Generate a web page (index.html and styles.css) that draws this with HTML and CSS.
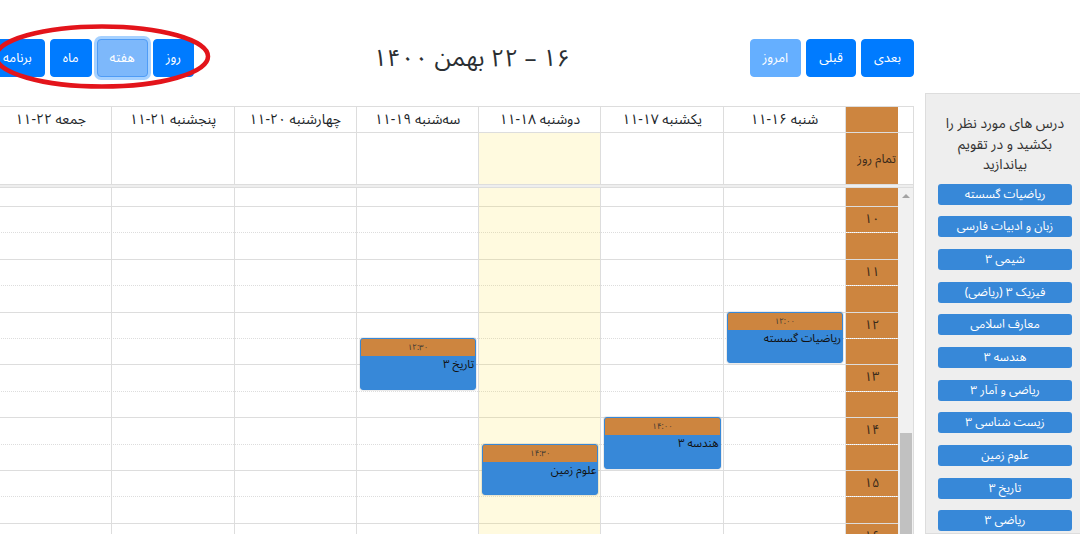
FILE: index.html
```html
<!DOCTYPE html>
<html lang="fa" dir="rtl">
<head>
<meta charset="utf-8">
<title>تقویم</title>
<link rel="stylesheet" href="styles.css">
</head>
<body>
<div class="page">
  <aside class="sidebar">
    <p class="hint">درس های مورد نظر را<br>بکشید و در تقویم<br>بیاندازید</p>
    <div class="course">ریاضیات گسسته</div>
    <div class="course">زبان و ادبیات فارسی</div>
    <div class="course">شیمی ۳</div>
    <div class="course">فیزیک ۳ (ریاضی)</div>
    <div class="course">معارف اسلامی</div>
    <div class="course">هندسه ۳</div>
    <div class="course">ریاضی و آمار ۳</div>
    <div class="course">زیست شناسی ۳</div>
    <div class="course">علوم زمین</div>
    <div class="course">تاریخ ۳</div>
    <div class="course">ریاضی ۳</div>
  </aside>

  <main class="cal">
    <div class="toolbar">
      <div class="btn-group">
        <button class="btn">بعدی</button>
        <button class="btn">قبلی</button>
        <button class="btn is-off">امروز</button>
      </div>
      <h2 class="title">۱۶ – ۲۲ بهمن ۱۴۰۰</h2>
      <div class="btn-group">
        <button class="btn">روز</button>
        <button class="btn is-active">هفته</button>
        <button class="btn">ماه</button>
        <button class="btn">برنامه</button>
      </div>
    </div>

    <div class="grid">
      <div class="row head">
        <div class="sb-space"></div>
        <div class="axis"></div>
        <div class="day">شنبه ۱۶-۱۱</div>
        <div class="day">یکشنبه ۱۷-۱۱</div>
        <div class="day">دوشنبه ۱۸-۱۱</div>
        <div class="day">سه‌شنبه ۱۹-۱۱</div>
        <div class="day">چهارشنبه ۲۰-۱۱</div>
        <div class="day">پنجشنبه ۲۱-۱۱</div>
        <div class="day">جمعه ۲۲-۱۱</div>
      </div>
      <div class="row allday">
        <div class="sb-space"></div>
        <div class="axis">تمام روز</div>
        <div class="day"></div>
        <div class="day"></div>
        <div class="day today"></div>
        <div class="day"></div>
        <div class="day"></div>
        <div class="day"></div>
        <div class="day"></div>
      </div>
      <div class="divider"></div>

      <div class="tbody">
        <div class="sbar">
          <span class="sbar-arrow"></span>
          <span class="sbar-thumb"></span>
        </div>
        <div class="scroller">
          <div class="slot first"><div class="axis"></div><div class="lane"></div></div>
          <div class="slot"><div class="axis">۱۰</div><div class="lane"></div></div>
          <div class="slot minor"><div class="axis"></div><div class="lane"></div></div>
          <div class="slot"><div class="axis">۱۱</div><div class="lane"></div></div>
          <div class="slot minor"><div class="axis"></div><div class="lane"></div></div>
          <div class="slot"><div class="axis">۱۲</div><div class="lane"></div></div>
          <div class="slot minor"><div class="axis"></div><div class="lane"></div></div>
          <div class="slot"><div class="axis">۱۳</div><div class="lane"></div></div>
          <div class="slot minor"><div class="axis"></div><div class="lane"></div></div>
          <div class="slot"><div class="axis">۱۴</div><div class="lane"></div></div>
          <div class="slot minor"><div class="axis"></div><div class="lane"></div></div>
          <div class="slot"><div class="axis">۱۵</div><div class="lane"></div></div>
          <div class="slot minor"><div class="axis"></div><div class="lane"></div></div>
          <div class="slot"><div class="axis">۱۶</div><div class="lane"></div></div>
          <div class="slot minor"><div class="axis"></div><div class="lane"></div></div>

          <div class="cols">
            <div class="col">
              <div class="ev" style="top:123.6px;height:51.8px">
                <div class="ev-time">۱۲:۰۰</div>
                <div class="ev-title">ریاضیات گسسته</div>
              </div>
            </div>
            <div class="col">
              <div class="ev" style="top:229.2px;height:51.8px">
                <div class="ev-time">۱۴:۰۰</div>
                <div class="ev-title">هندسه ۳</div>
              </div>
            </div>
            <div class="col today">
              <div class="ev" style="top:255.6px;height:51.8px">
                <div class="ev-time">۱۴:۳۰</div>
                <div class="ev-title">علوم زمین</div>
              </div>
            </div>
            <div class="col">
              <div class="ev" style="top:150px;height:51.8px">
                <div class="ev-time">۱۲:۳۰</div>
                <div class="ev-title">تاریخ ۳</div>
              </div>
            </div>
            <div class="col"></div>
            <div class="col"></div>
            <div class="col"></div>
          </div>
        </div>
      </div>
    </div>
  </main>
</div>

<svg class="mark" width="230" height="75" viewBox="0 0 230 75" aria-hidden="true">
  <ellipse cx="112" cy="36.5" rx="106" ry="30" fill="none" stroke="#e3141b" stroke-width="4.5"/>
</svg>
</body>
</html>
```
FILE: styles.css
```css
* {
  box-sizing: border-box;
}

html,
body {
  margin: 0;
  overflow: hidden;
}

body {
  position: relative;
  width: 1080px;
  height: 534px;
  background: #fff;
  color: #212529;
  font-family: "Noto Sans Arabic", "Noto Naskh Arabic", "DejaVu Sans", sans-serif;
}

.page {
  display: flex;
  align-items: flex-start;
  gap: 11px;
  height: 534px;
}

/* ---------- sidebar ---------- */
.sidebar {
  flex: none;
  width: 155px;
  height: 441px;
  margin-top: 93px;
  padding: 20px 8px 0 12px;
  background: #eee;
  border: 1px solid #ddd;
  border-right: none;
}

.hint {
  margin: 0 0 8px;
  font-size: 14px;
  line-height: 20.5px;
  text-align: center;
  color: #333;
}

.course {
  height: 21px;
  margin-bottom: 11.7px;
  line-height: 21px;
  font-size: 12px;
  text-align: center;
  color: #fff;
  background: #3788d8;
  border-radius: 3px;
}

/* ---------- calendar ---------- */
.cal {
  flex: none;
  width: 924px;
  margin-left: -10px;
  padding-top: 39px;
}

.toolbar {
  display: flex;
  align-items: center;
  justify-content: space-between;
  height: 38px;
  margin-bottom: 29px;
}

.btn-group {
  display: flex;
  gap: 5px;
}

.btn {
  padding: 6px 12px;
  font-family: inherit;
  font-size: 13px;
  line-height: 24px;
  color: #fff;
  background: #007bff;
  border: 1px solid #007bff;
  border-radius: 4px;
}

.btn.is-off {
  opacity: 0.6;
}

.btn.is-active {
  background: #7db8fb;
  border-color: #4f9cf6;
  box-shadow: 0 0 0 3px rgba(0, 123, 255, 0.35);
}

.title {
  margin: 0;
  font-size: 24px;
  font-weight: normal;
  color: #2b2f33;
}

.grid {
  border-top: 1px solid #ddd;
  border-right: 1px solid #ddd;
}

.row {
  display: flex;
  border-bottom: 1px solid #ddd;
}

.head {
  height: 26px;
}

.allday {
  height: 52px;
}

.sb-space {
  flex: none;
  width: 15px;
}

.axis {
  flex: none;
  width: 52px;
  background: #cd853f;
  color: #3a2a1a;
  font-size: 13px;
}

.day {
  flex: 1;
  border-right: 1px solid #ddd;
}

.head .day {
  font-size: 14px;
  line-height: 25px;
  text-align: center;
}

.allday .axis {
  display: flex;
  align-items: center;
  padding-right: 2px;
  font-size: 12.5px;
}

.today {
  background: rgba(255, 220, 40, 0.15);
}

.divider {
  height: 3px;
  background: #eee;
  border-bottom: 1px solid #ddd;
}

.tbody {
  display: flex;
  height: 346px;
}

.sbar {
  flex: none;
  width: 15px;
  display: flex;
  flex-direction: column;
  align-items: center;
  background: #f1f1f1;
}

.sbar-arrow {
  margin-top: 6px;
  width: 0;
  height: 0;
  border-left: 4px solid transparent;
  border-right: 4px solid transparent;
  border-bottom: 4px solid #a3a3a3;
}

.sbar-thumb {
  margin-top: auto;
  width: 12px;
  height: 101px;
  background: #c1c1c1;
}

.scroller {
  flex: 1;
  position: relative;
  overflow: hidden;
}

.slot {
  display: flex;
  height: 26.4px;
  border-top: 1px solid #ddd;
}

.slot.minor {
  border-top: 1px dotted #ddd;
}

.slot.first {
  height: 18px;
  border-top: none;
}

.slot .axis {
  text-align: center;
  line-height: 25px;
}

.lane {
  flex: 1;
}

.cols {
  position: absolute;
  top: 0;
  bottom: 0;
  left: 0;
  right: 52px;
  display: flex;
}

.col {
  position: relative;
  flex: 1;
  border-right: 1px solid #ddd;
}

.ev {
  position: absolute;
  left: 3px;
  right: 2px;
  overflow: hidden;
  background: #3788d8;
  border: 1px solid #3788d8;
  border-radius: 3px;
  box-shadow: 0 0 0 1px rgba(0, 0, 0, 0.08);
}

.ev-time {
  height: 17px;
  line-height: 17px;
  font-size: 8px;
  text-align: center;
  color: #333;
  background: #cd853f;
}

.ev-title {
  padding: 0 1px;
  font-size: 11.5px;
  line-height: 17px;
  color: #111;
  text-align: right;
}

.mark {
  position: absolute;
  left: -10px;
  top: 20px;
}
```
